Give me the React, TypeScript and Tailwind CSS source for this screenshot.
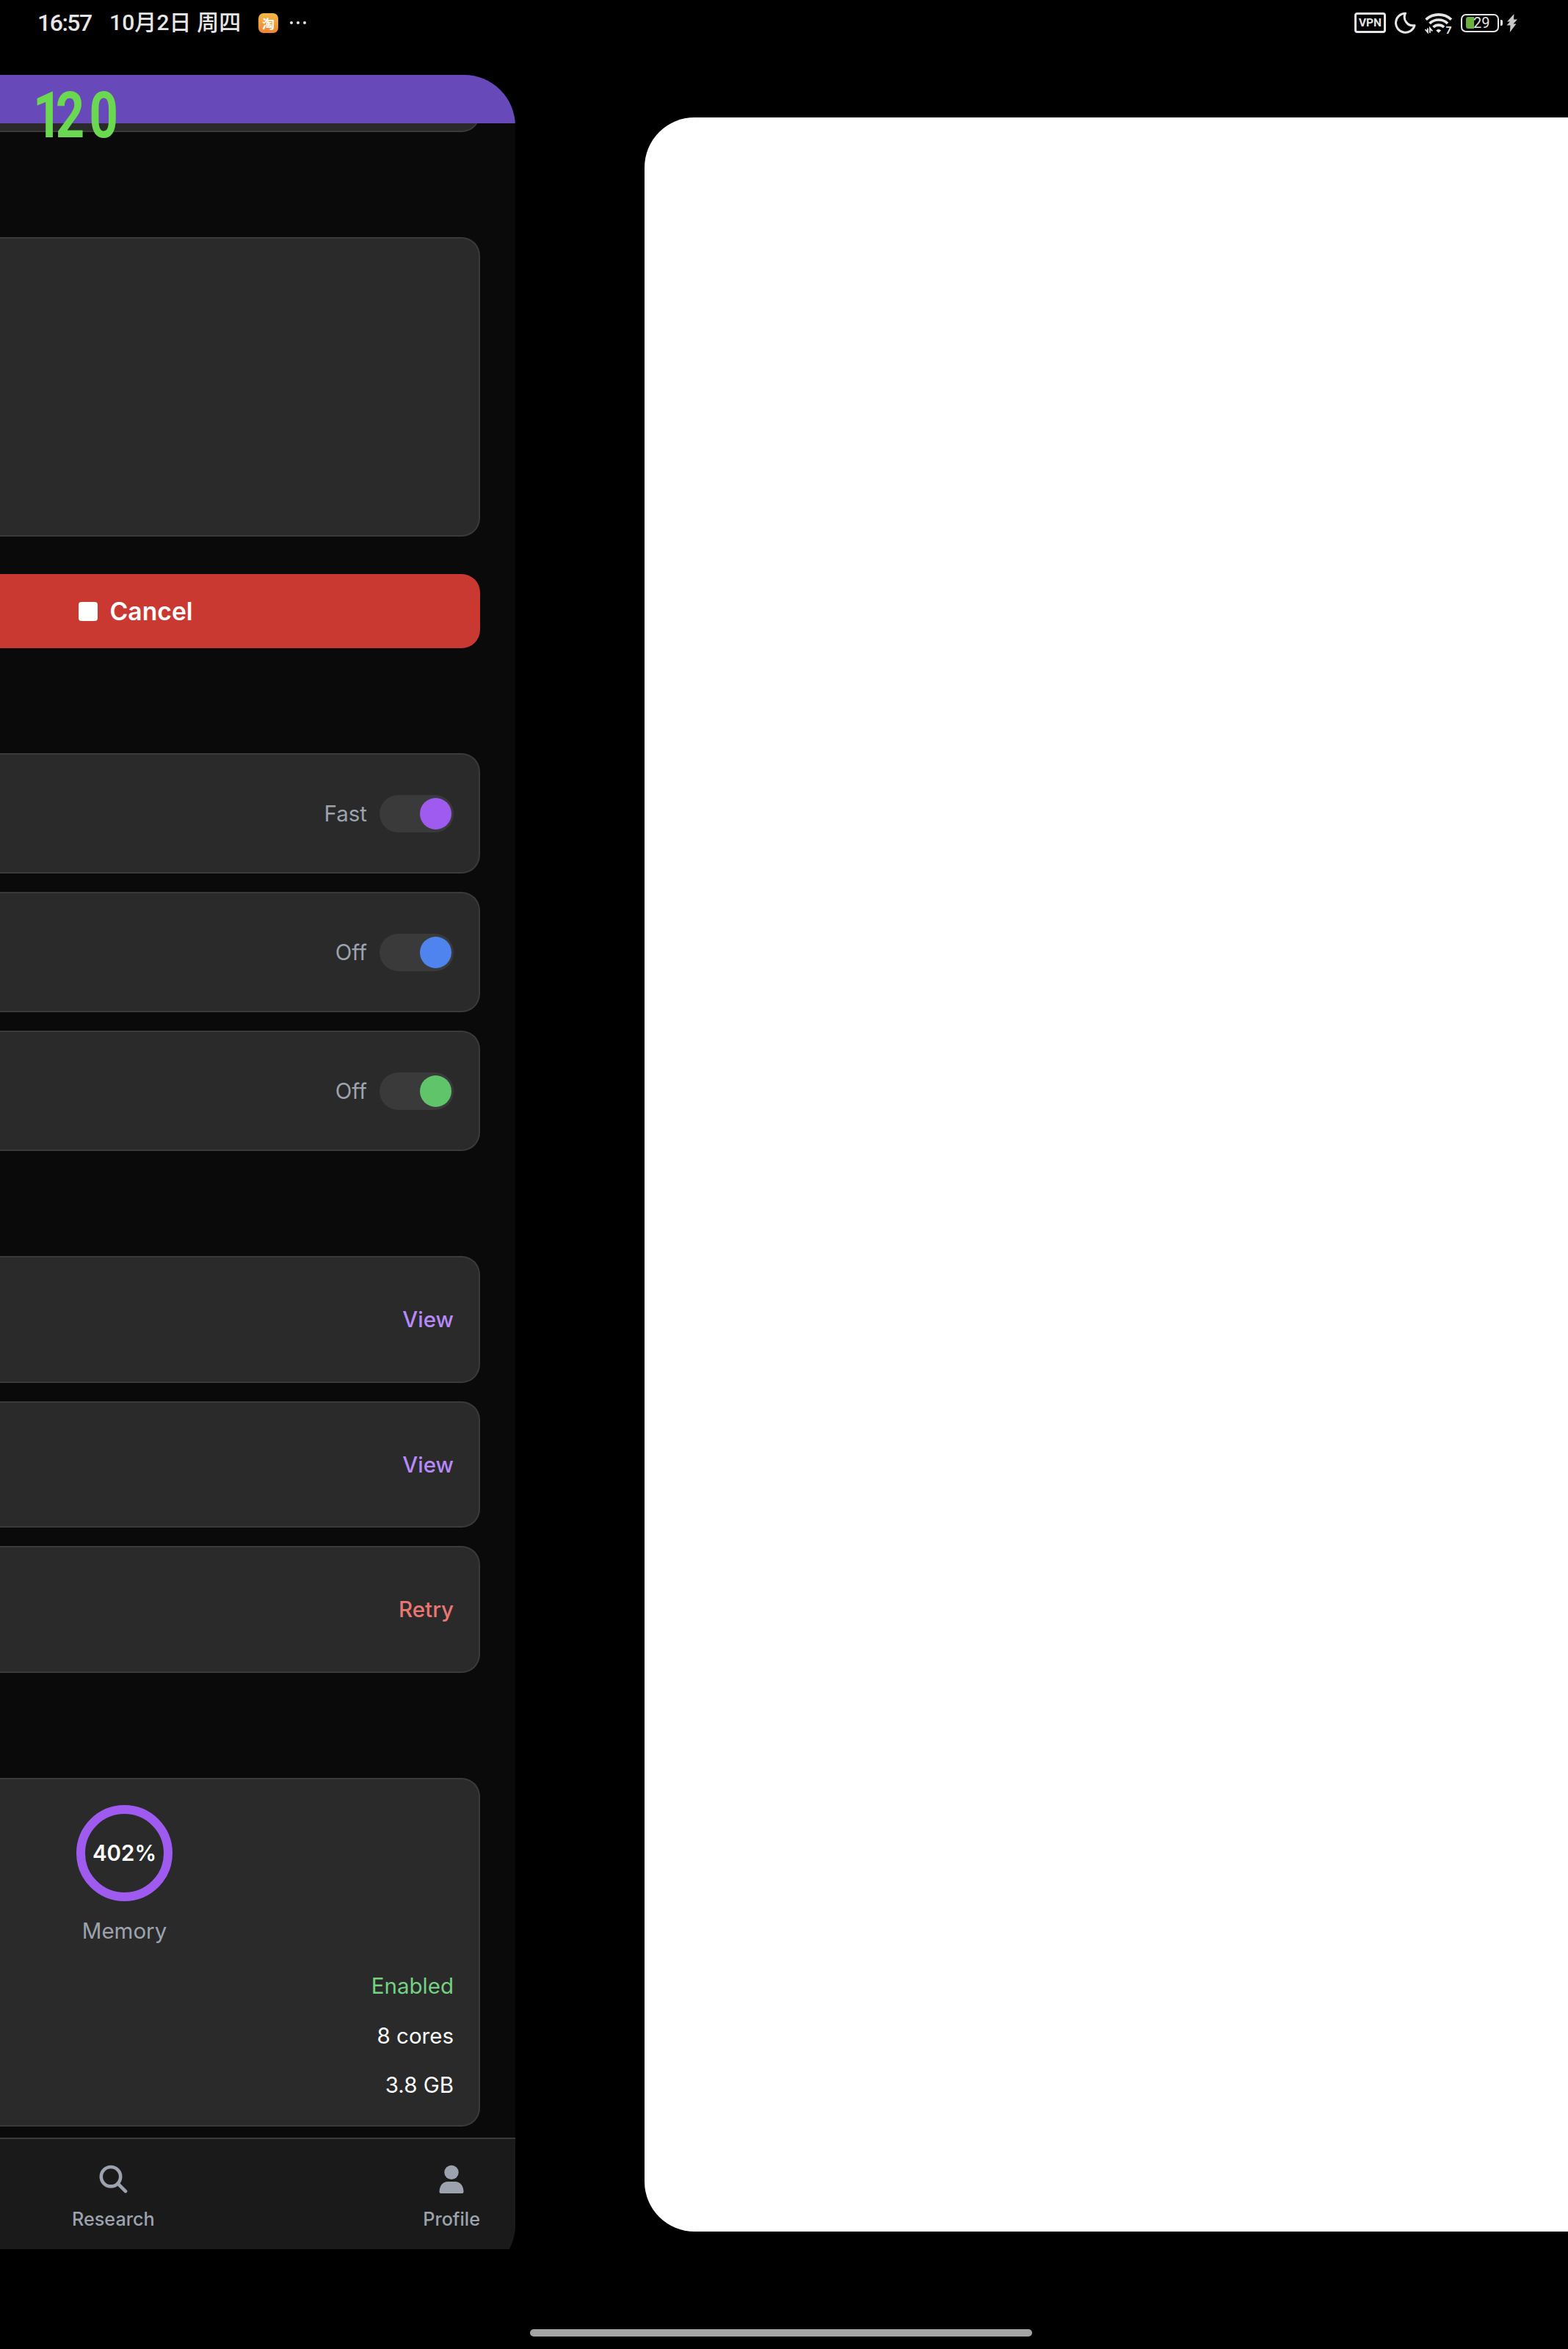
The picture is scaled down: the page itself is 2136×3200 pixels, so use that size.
import React from "react";

const inter = "font-['Inter',sans-serif] leading-none";

function StatusBar() {
  return (
    <header className="flex h-[62px] shrink-0 items-center justify-between pl-[51px] pr-[69px] text-[#e6e6e6]">
      <div className="flex items-center">
        <span className="w-[98px] whitespace-nowrap font-['Roboto',sans-serif] text-[32px] font-medium leading-none tracking-[-1.5px]">
          16:57
        </span>
        <span className="w-[203px] whitespace-nowrap font-['Roboto','Noto_Sans_CJK_SC',sans-serif] text-[30px] font-medium leading-none tracking-[0.1px]">
          10月2日 周四
        </span>
        <span className="flex size-[27px] items-center justify-center rounded-[7px] bg-linear-to-b from-[#f3b846] to-[#ee8435] font-['Noto_Sans_CJK_SC',sans-serif] text-[17px] font-bold leading-none text-white">
          淘
        </span>
        <span className="ml-[16px] flex gap-[5px]">
          <i className="size-1 rounded-full bg-[#e6e6e6]" />
          <i className="size-1 rounded-full bg-[#e6e6e6]" />
          <i className="size-1 rounded-full bg-[#e6e6e6]" />
        </span>
      </div>
      <div className="flex items-center">
        <span className="flex h-[28px] w-[43px] items-center justify-center rounded-[4px] border-3 border-[#e6e6e6] pt-[2px] font-['Roboto',sans-serif] text-[15.500px] font-bold leading-none">
          VPN
        </span>
        <svg className="ml-[12px]" width="29" height="30" viewBox="0 0 29 30" fill="none">
          <path d="M14.5 2.2A13 13 0 1 0 27 18.6A11.5 11.5 0 0 1 14.5 2.2Z" stroke="#e6e6e6" strokeWidth="3" strokeLinejoin="round" />
        </svg>
        <svg className="ml-[12px] overflow-visible" width="40" height="38" viewBox="0 -3 40 38" fill="none">
          <g stroke="#e6e6e6" strokeWidth="3.7">
            <path d="M1.5 11.6A25.500 25.500 0 0 1 36 11.6" />
            <path d="M6.5 17A17.500 17.500 0 0 1 31 17" />
            <path d="M11.500 22A10.500 10.500 0 0 1 26 22" />
          </g>
          <path d="M15.2 26.4Q18.700 23 22.2 26.4L18.700 29.800Z" fill="#e6e6e6" />
          <path d="M0.500 25L3.900 29V23.4M6.900 29.800V23.4L10.300 27.4" stroke="#e6e6e6" strokeWidth="1.9" />
          <text x="28.500" y="31" fill="#e6e6e6" className="font-['Inter',sans-serif] text-[13.500px] font-bold">7</text>
        </svg>
        <span className="ml-[9px] flex h-[25px] w-[52px] items-center rounded-[7px] border-2 border-[#e6e6e6] pl-[5px]">
          <i className="h-[16px] w-[11px] rounded-l-[3px] bg-[#6ab23a]" />
          <b className="-ml-[1px] font-['Roboto',sans-serif] text-[20px] font-normal leading-none">29</b>
        </span>
        <i className="ml-[2px] h-[8px] w-[3px] rounded-r-[2px] bg-[#e6e6e6]" />
        <svg className="ml-[5px]" width="15" height="25" viewBox="0 0 15 25">
          <path d="M10.5 0L1 10.5H5L0.5 15.5H5.500L4.800 25L13.5 13.5H9.5L15 7.5H10Z" fill="#c9c9c9" />
        </svg>
      </div>
    </header>
  );
}

const settings = [
  { label: "Fast", knob: "bg-[#9f5bf0]" },
  { label: "Off", knob: "bg-[#4f83ee]" },
  { label: "Off", knob: "bg-[#5fc46a]" },
];

const tasks = [
  { label: "View", color: "text-[#b689f8]" },
  { label: "View", color: "text-[#b689f8]" },
  { label: "Retry", color: "text-[#e97672]" },
];

const specs = [
  { value: "Enabled", color: "text-[#74d283]" },
  { value: "8 cores", color: "text-white" },
  { value: "3.8 GB", color: "text-white" },
];

const card = "rounded-r-[25px] border-2 border-l-0 border-[#3a3a3a] bg-[#2a2a2a]";

function AppWindow() {
  return (
    <section className="h-[2962px] w-[702px] shrink-0 overflow-hidden">
      <div className={`${inter} flex h-[2999px] flex-col overflow-hidden rounded-r-[70px] bg-[#0a0a0a] text-[29.500px]`}>
        <div className="h-[66px] shrink-0 bg-[#6749b9]" />

        <main className="flex h-[2744px] shrink-0 flex-col overflow-hidden pr-[48px]">
          <div className={`${card} -mt-[60px] h-[72px] shrink-0`} />
          <div className={`${card} mt-[143px] h-[408px] shrink-0`} />
          <button className="mt-[51px] flex h-[101px] shrink-0 items-center rounded-r-[25px] bg-[#ca3931] pl-[107px] text-white">
            <i className="size-[26px] rounded-[4px] bg-white" />
            <span className="ml-[16.500px] pt-[1px] text-[33.700px] font-semibold">Cancel</span>
          </button>

          <div className="mt-[143px] flex shrink-0 flex-col gap-[25px]">
            {settings.map((s, i) => (
              <div key={i} className={`${card} flex h-[164px] items-center justify-end pr-[34px]`}>
                <span className="mr-[17px] pt-[2px] text-[#9ca3af]">{s.label}</span>
                <span className="flex h-[51px] w-[101px] items-center justify-end rounded-full bg-[#3a3a3a] pr-[3px]">
                  <i className={`${s.knob} size-[43px] rounded-full`} />
                </span>
              </div>
            ))}
          </div>

          <div className="mt-[143px] flex shrink-0 flex-col gap-[25px]">
            {tasks.map((t, i) => (
              <div key={i} className={`${card} ${t.color} flex h-[172.5px] items-center justify-end pr-[34px] pt-[1px] font-medium`}>
                {t.label}
              </div>
            ))}
          </div>

          <div className={`${card} mt-[143px] flex h-[475px] shrink-0 flex-col pr-[34px] pt-[35px]`}>
            <div className="ml-[104px] flex w-[131px] flex-col items-center">
              <div className="flex size-[131px] items-center justify-center rounded-full border-12 border-[#9f5bf0] pt-[2px] font-semibold text-white">
                402%
              </div>
              <span className="mt-[26px] text-[#9ca3af]">Memory</span>
            </div>
            <div className="mt-[46px] flex flex-col items-end gap-[38px]">
              {specs.map((s) => (
                <span key={s.value} className={s.color}>{s.value}</span>
              ))}
            </div>
          </div>
        </main>

        <nav className="flex h-[189px] shrink-0 justify-between border-t-2 border-[#3a3a3a] bg-[#1a1a1a] pl-[98px] pr-[48px] pt-[35px] text-[25.200px] font-medium text-[#9ca3af]">
          <div className="flex flex-col items-center">
            <svg width="39" height="39" viewBox="0 0 39 39" fill="none" stroke="#9ca3af" strokeWidth="4.6" strokeLinecap="round">
              <circle cx="16" cy="16.2" r="13.2" />
              <path d="M26 26.2L36 36.2" />
            </svg>
            <span className="mt-[23px]">Research</span>
          </div>
          <div className="flex flex-col items-center">
            <svg width="34" height="39" viewBox="0 0 34 39" fill="#9ca3af">
              <circle cx="17" cy="10.4" r="9.7" />
              <path d="M2.5 39Q0.5 39 0.5 37C0.5 28.500 5.500 23 12 23H22C28.500 23 33.500 28.500 33.500 37Q33.500 39 31.500 39Z" />
            </svg>
            <span className="mt-[23px]">Profile</span>
          </div>
        </nav>
      </div>
    </section>
  );
}

export default function App() {
  return (
    <div className="relative flex h-[3200px] w-[2136px] flex-col overflow-hidden bg-black">
      <StatusBar />
      <div className="mt-[40px] flex h-[2962px] shrink-0">
        <AppWindow />
        <section className="ml-[176px] mt-[58px] h-[2880px] flex-1 rounded-l-[68px] bg-white" />
      </div>
      <div className="ml-[722px] mt-[109px] h-[10px] w-[684px] shrink-0 rounded-full bg-[#a4a4a4]" />

      {/* Frame-rate overlay */}
      <div className="absolute left-[45px] top-[114px] origin-left scale-x-[0.79] whitespace-nowrap font-['Roboto',sans-serif] text-[87px] font-bold leading-[87px] text-[#6bd851]">
        <span className="tracking-[-11px]">1</span>
        <span className="tracking-[8px]">20</span>
      </div>
    </div>
  );
}
